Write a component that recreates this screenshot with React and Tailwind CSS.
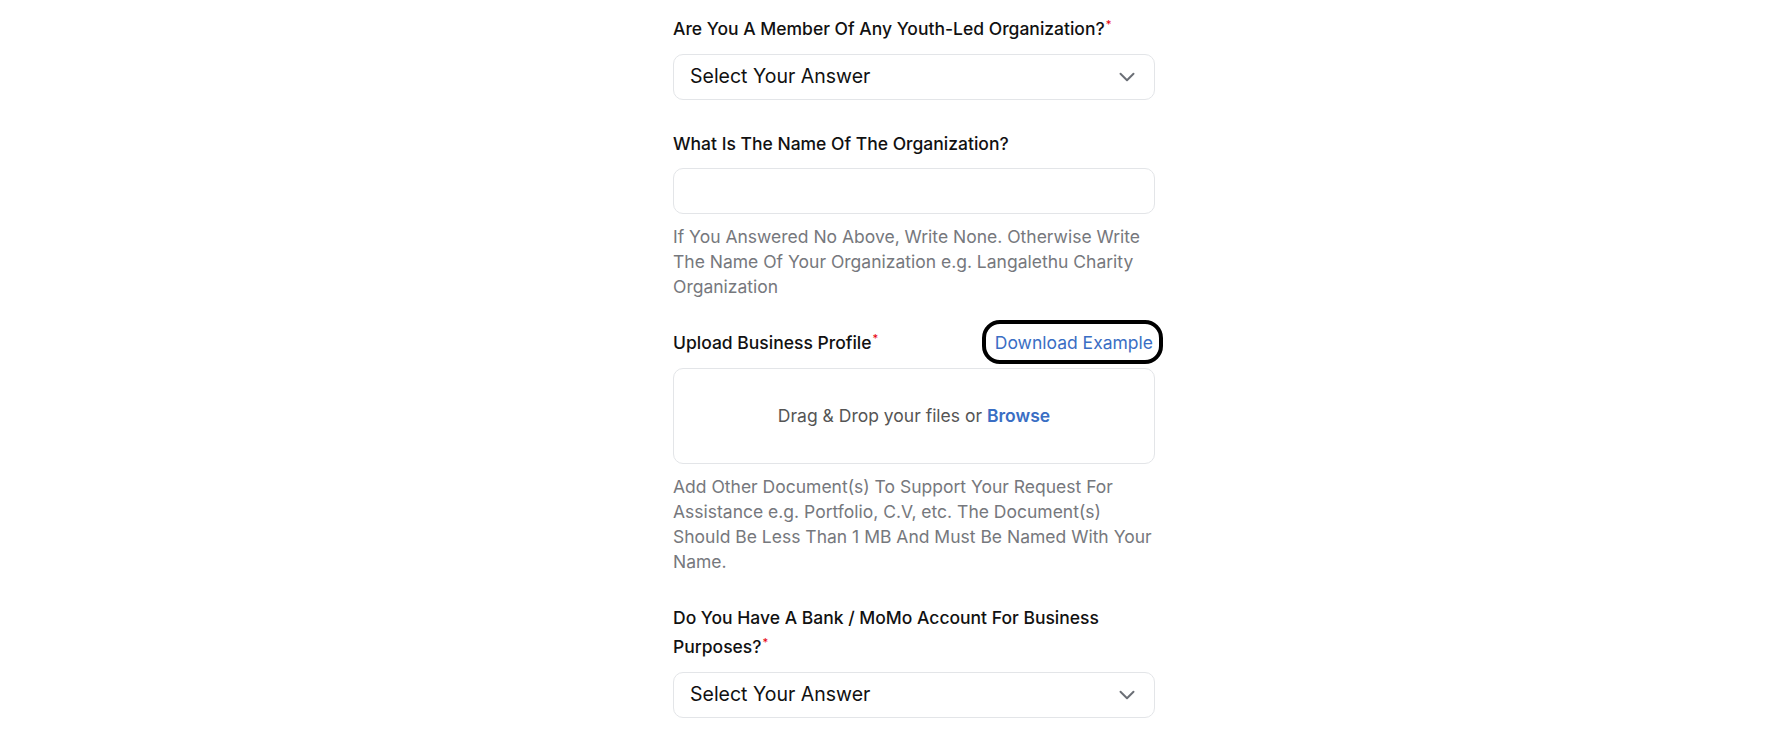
import React from 'react';
import { ChevronDown } from 'lucide-react';

const Req = () => <span className="relative -top-[7px] ml-[1px] text-[11px] text-red-600">*</span>;

const SelectBox = () => (
  <div className="flex items-center justify-between h-[46px] pl-[16px] pr-[14px] border border-[#e3e5e8] rounded-[10px] bg-white">
    <span className="text-[19.5px] text-[#111]">Select Your Answer</span>
    <ChevronDown className="w-[26px] h-[26px] text-[#6b6f76]" strokeWidth={1.8} />
  </div>
);

const App = () => {
  return (
    <div className="min-h-screen bg-white font-['Inter','Noto_Sans',sans-serif]">
      <div className="w-[482px] ml-[673px] pt-[15px]">
        {/* Youth org */}
        <div className="mb-[30px]">
          <label className="block text-[17.5px] leading-[28px] font-medium text-[#111] mb-[9px]">
            Are You A Member Of Any Youth-Led Organization?<Req />
          </label>
          <SelectBox />
        </div>

        {/* Org name */}
        <div className="mb-[30px]">
          <label className="block text-[17.5px] leading-[28px] font-medium text-[#111] mb-[10px]">
            What Is The Name Of The Organization?
          </label>
          <div className="h-[46px] border border-[#e3e5e8] rounded-[10px] bg-white"></div>
          <p className="mt-[10px] text-[17.5px] leading-[25px] text-[#76787d]">
            If You Answered No Above, Write None. Otherwise Write The Name Of Your Organization e.g. Langalethu Charity Organization
          </p>
        </div>

        {/* Upload */}
        <div className="mb-[29px]">
          <div className="flex items-start justify-between mb-[9px]">
            <label className="block text-[17.5px] leading-[28px] font-medium text-[#111]">
              Upload Business Profile<Req />
            </label>
            <a className="relative text-[17.5px] leading-[28px] text-[#3a6ec4] mr-[2px]">
              Download Example
              <span className="absolute -left-[13px] -right-[10px] -top-[9px] -bottom-[7px] border-[4px] border-black rounded-[18px] pointer-events-none"></span>
            </a>
          </div>
          <div className="flex items-center justify-center h-[96px] border border-[#e3e5e8] rounded-[10px] bg-white">
            <span className="text-[17.5px] text-[#555]">
              Drag &amp; Drop your files or <span className="font-semibold text-[#3a6ec4]">Browse</span>
            </span>
          </div>
          <p className="mt-[10px] text-[17.5px] leading-[25px] text-[#76787d]">
            Add Other Document(s) To Support Your Request For Assistance e.g. Portfolio, C.V, etc. The Document(s) Should Be Less Than 1 MB And Must Be Named With Your Name.
          </p>
        </div>

        {/* Bank */}
        <div>
          <label className="block text-[17.5px] leading-[29px] font-medium text-[#111] mb-[8px] pr-[40px]">
            Do You Have A Bank / MoMo Account For Business Purposes?<Req />
          </label>
          <SelectBox />
        </div>
      </div>
    </div>
  );
};

export default App;
